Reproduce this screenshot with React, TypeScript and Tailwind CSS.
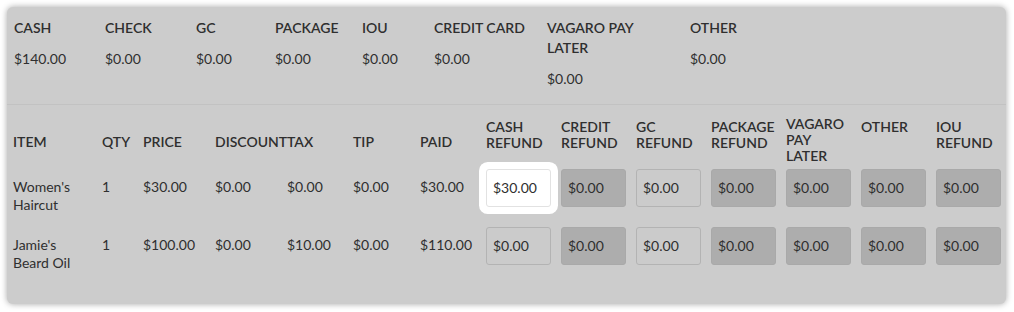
import React from 'react';

const totals = [
  { label: 'CASH', value: '$140.00', w: 'w-[91px]' },
  { label: 'CHECK', value: '$0.00', w: 'w-[91px]' },
  { label: 'GC', value: '$0.00', w: 'w-[79px]' },
  { label: 'PACKAGE', value: '$0.00', w: 'w-[87px]' },
  { label: 'IOU', value: '$0.00', w: 'w-[72px]' },
  { label: 'CREDIT CARD', value: '$0.00', w: 'w-[113px]' },
  { label: 'VAGARO PAY LATER', value: '$0.00', w: 'w-[143px] pr-[46px]' },
  { label: 'OTHER', value: '$0.00', w: 'w-[90px]' },
];

const cols = 'grid grid-cols-[89px_41px_72px_72px_66px_67px_66px_75px_75px_75px_75px_75px_75px_65px]';

const leftHeaders = ['ITEM', 'QTY', 'PRICE', 'DISCOUNT', 'TAX', 'TIP', 'PAID'];
const refundHeaders = [
  ['CASH', 'REFUND'],
  ['CREDIT', 'REFUND'],
  ['GC', 'REFUND'],
  ['PACKAGE', 'REFUND'],
  ['VAGARO', 'PAY', 'LATER'],
  ['OTHER'],
  ['IOU', 'REFUND'],
];

type Kind = 'focus' | 'open' | 'locked';

const rows: { item: string[]; cells: string[]; refunds: { value: string; kind: Kind }[] }[] = [
  {
    item: ["Women's", 'Haircut'],
    cells: ['1', '$30.00', '$0.00', '$0.00', '$0.00', '$30.00'],
    refunds: [
      { value: '$30.00', kind: 'focus' },
      { value: '$0.00', kind: 'locked' },
      { value: '$0.00', kind: 'open' },
      { value: '$0.00', kind: 'locked' },
      { value: '$0.00', kind: 'locked' },
      { value: '$0.00', kind: 'locked' },
      { value: '$0.00', kind: 'locked' },
    ],
  },
  {
    item: ["Jamie's", 'Beard Oil'],
    cells: ['1', '$100.00', '$0.00', '$10.00', '$0.00', '$110.00'],
    refunds: [
      { value: '$0.00', kind: 'open' },
      { value: '$0.00', kind: 'locked' },
      { value: '$0.00', kind: 'open' },
      { value: '$0.00', kind: 'locked' },
      { value: '$0.00', kind: 'locked' },
      { value: '$0.00', kind: 'locked' },
      { value: '$0.00', kind: 'locked' },
    ],
  },
];

function RefundBox({ value, kind }: { value: string; kind: Kind }) {
  const style =
    kind === 'focus'
      ? 'bg-white border-[#e2e2e2] shadow-[0_0_0_7px_#ffffff]'
      : kind === 'open'
      ? 'bg-[#cbcbcb] border-[#b3b3b3]'
      : 'bg-[#adadad] border-[#a9a9a9]';
  return (
    <div className={`w-[65px] h-[38px] rounded-[3px] border pl-[6px] flex items-center text-[14px] ${style}`}>
      {value}
    </div>
  );
}

export default function App() {
  return (
    <div className="w-[1014px] h-[312px] bg-white pt-[7px] pl-[7px] text-[#2f2f2f] font-['Lato',sans-serif]">
      <div className="w-[999px] h-[297px] rounded-[6px] bg-[#cccccc] shadow-[0_0_6px_rgba(0,0,0,0.35)]">
        <div className="h-[98px] border-b border-[#c2c2c2] pl-[7px] pt-[11px] flex">
          {totals.map((t) => (
            <div key={t.label} className={t.w}>
              <div className="text-[14px] leading-5 font-semibold">{t.label}</div>
              <div className="text-[14px] leading-5 mt-[11px]">{t.value}</div>
            </div>
          ))}
        </div>

        <div className="pl-[6px]">
          <div className={`${cols} h-[64px] text-[14px] leading-4 font-semibold`}>
            {leftHeaders.map((h) => (
              <div key={h} className="pt-[29px] whitespace-nowrap">{h}</div>
            ))}
            {refundHeaders.map((h) => (
              <div key={h.join(' ')} className={h.length === 3 ? 'pt-[11px]' : 'pt-[14px]'}>
                {h.map((line) => (
                  <div key={line}>{line}</div>
                ))}
              </div>
            ))}
          </div>

          {rows.map((r) => (
            <div key={r.item[0]} className={`${cols} h-[58px] text-[14px] leading-[18px]`}>
              <div className="pt-[9px]">
                {r.item.map((line) => (
                  <div key={line}>{line}</div>
                ))}
              </div>
              {r.cells.map((c, i) => (
                <div key={i} className="pt-[9px]">{c}</div>
              ))}
              {r.refunds.map((f, i) => (
                <div key={i}>
                  <RefundBox value={f.value} kind={f.kind} />
                </div>
              ))}
            </div>
          ))}
        </div>
      </div>
    </div>
  );
}
